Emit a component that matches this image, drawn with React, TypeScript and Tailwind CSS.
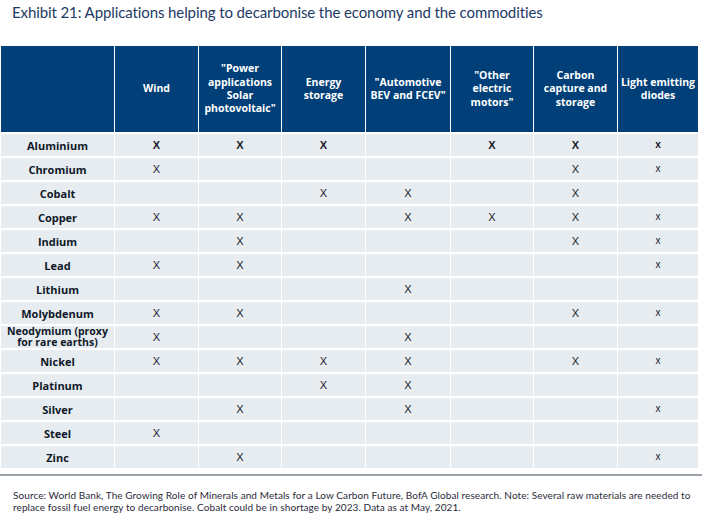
import React from "react";

const headers: string[][] = [
  [],
  ["Wind"],
  ['"Power', "applications", "Solar", 'photovoltaic"'],
  ["Energy", "storage"],
  ['"Automotive', 'BEV and FCEV"'],
  ['"Other', "electric", 'motors"'],
  ["Carbon", "capture and", "storage"],
  ["Light emitting", "diodes"],
];

const rows: { name: string[]; marks: number[] }[] = [
  { name: ["Aluminium"], marks: [1, 1, 1, 0, 1, 1, 1] },
  { name: ["Chromium"], marks: [1, 0, 0, 0, 0, 1, 1] },
  { name: ["Cobalt"], marks: [0, 0, 1, 1, 0, 1, 0] },
  { name: ["Copper"], marks: [1, 1, 0, 1, 1, 1, 1] },
  { name: ["Indium"], marks: [0, 1, 0, 0, 0, 1, 1] },
  { name: ["Lead"], marks: [1, 1, 0, 0, 0, 0, 1] },
  { name: ["Lithium"], marks: [0, 0, 0, 1, 0, 0, 0] },
  { name: ["Molybdenum"], marks: [1, 1, 0, 0, 0, 1, 1] },
  { name: ["Neodymium (proxy", "for rare earths)"], marks: [1, 0, 0, 1, 0, 0, 0] },
  { name: ["Nickel"], marks: [1, 1, 1, 1, 0, 1, 1] },
  { name: ["Platinum"], marks: [0, 0, 1, 1, 0, 0, 0] },
  { name: ["Silver"], marks: [0, 1, 0, 1, 0, 0, 1] },
  { name: ["Steel"], marks: [1, 0, 0, 0, 0, 0, 0] },
  { name: ["Zinc"], marks: [0, 1, 0, 0, 0, 0, 1] },
];

export default function App() {
  return (
    <div className="w-[702px] h-[517px] bg-white relative overflow-hidden" style={{ fontFamily: "Lato, 'Open Sans', sans-serif" }}>
      <div className="pl-[12px] pt-[2px] h-[46px] text-[15px] leading-[20px] text-[#1d3a64] tracking-[-0.1px]">
        Exhibit 21: Applications helping to decarbonise the economy and the commodities
      </div>
      <div
        className="ml-[1px] grid grid-cols-[113px_83px_82px_83px_84px_82px_83px_80px] gap-x-[1px] gap-y-[2px] bg-white"
        style={{ fontFamily: "'Open Sans', Lato, sans-serif" }}
      >
        {headers.map((h, i) => (
          <div key={i} className="h-[86px] bg-[#003f77] flex flex-col items-center justify-center text-white font-bold text-[10.5px] leading-[13.3px] text-center">
            {h.map((l, j) => (
              <div key={j}>{l}</div>
            ))}
          </div>
        ))}
        {rows.map((r, ri) => (
          <React.Fragment key={ri}>
            <div className={`h-[22px] bg-[#e6ecf0] flex flex-col items-center justify-center font-bold text-[#101828] text-center ${r.name.length > 1 ? "text-[10.5px] leading-[11px]" : "text-[11px] leading-[13px]"}`}>
              {r.name.map((l, j) => (
                <div key={j}>{l}</div>
              ))}
            </div>
            {r.marks.map((m, ci) => (
              <div
                key={ci}
                className={`h-[22px] bg-[#e6ecf0] flex items-center justify-center text-[#1a1a2a] leading-none ${ri === 0 ? "font-bold" : ""} ${ci === 6 ? "text-[10px]" : "text-[11px]"}`}
                style={{ fontFamily: "'Liberation Sans', Arial, sans-serif" }}
              >
                {m ? (ci === 6 ? "x" : "X") : ""}
              </div>
            ))}
          </React.Fragment>
        ))}
      </div>
      <div className="mt-[6px] h-[2px] bg-[#9aa3ab] w-full" />
      <div className="pl-[13px] pt-[13px] text-[10px] leading-[12px] text-[#2a2a3a] tracking-[0.08px]">
        Source: World Bank, The Growing Role of Minerals and Metals for a Low Carbon Future, BofA Global research. Note: Several raw materials are needed to
        <br />
        replace fossil fuel energy to decarbonise. Cobalt could be in shortage by 2023. Data as at May, 2021.
      </div>
    </div>
  );
}
